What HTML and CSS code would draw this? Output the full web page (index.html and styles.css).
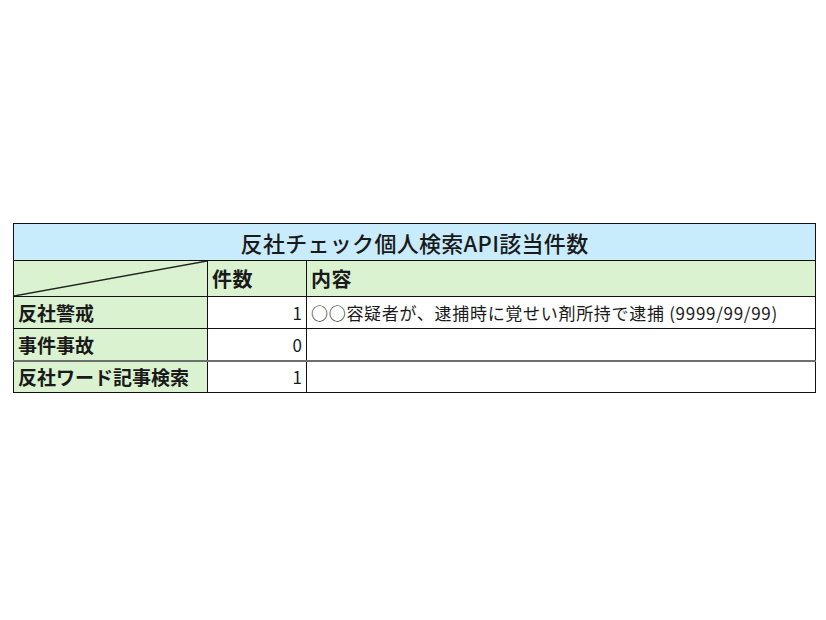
FILE: index.html
```html
<!DOCTYPE html>
<html lang="ja">
<head>
<meta charset="utf-8">
<title>反社チェック個人検索API該当件数</title>
<link rel="stylesheet" href="styles.css">
</head>
<body>
<table class="sheet">
  <colgroup>
    <col class="c-label">
    <col class="c-count">
    <col class="c-detail">
  </colgroup>
  <tr class="r-title">
    <th colspan="3" class="title">反社チェック個人検索API該当件数</th>
  </tr>
  <tr class="r-head">
    <th class="corner"><svg class="diag" viewBox="0 0 100 100" preserveAspectRatio="none"><line x1="0" y1="100" x2="100" y2="0" stroke="#222" stroke-width="1.4" vector-effect="non-scaling-stroke"/></svg></th>
    <th class="head">件数</th>
    <th class="head">内容</th>
  </tr>
  <tr class="r-row">
    <th class="label">反社警戒</th>
    <td class="num">1</td>
    <td class="detail">○○容疑者が、逮捕時に覚せい剤所持で逮捕 (9999/99/99)</td>
  </tr>
  <tr class="r-row">
    <th class="label">事件事故</th>
    <td class="num">0</td>
    <td class="detail"></td>
  </tr>
  <tr class="r-row r-last">
    <th class="label">反社ワード記事検索</th>
    <td class="num">1</td>
    <td class="detail"></td>
  </tr>
</table>
</body>
</html>
```
FILE: styles.css
```css
html, body {
  margin: 0;
  padding: 0;
  background: #ffffff;
}
body {
  padding: 223px 0 0 13px;
  font-family: "Noto Sans CJK JP", "Noto Sans", sans-serif;
  color: #1a1a1a;
}
.sheet {
  border-collapse: collapse;
  table-layout: fixed;
  width: 802px;
  border: 1px solid #111;
}
.c-label { width: 194px; }
.c-count { width: 99px; }
.c-detail { width: 509px; }

.sheet th, .sheet td {
  border: 1px solid #111;
  padding: 0 4px;
  line-height: 1;
  white-space: nowrap;
  overflow: hidden;
}
.r-title { height: 37px; }
.title {
  background: #c9ecfd;
  font-size: 22px;
  font-weight: 500;
  text-align: center;
  letter-spacing: 0.3px;
  border-bottom: 2px solid #56604f;
  padding-top: 0;
}
.r-head { height: 36px; }
.head {
  background: #daf2d0;
  font-size: 20px;
  font-weight: 700;
  text-align: left;
  letter-spacing: 0.5px;
  padding-top: 2px;
}
.corner {
  background: #daf2d0;
  padding: 0;
  position: relative;
}
.diag {
  position: absolute;
  left: 0;
  top: 0;
  width: 100%;
  height: 100%;
  display: block;
}
.r-row { height: 32px; }
.label {
  background: #daf2d0;
  font-size: 19px;
  font-weight: 700;
  text-align: left;
}
.num {
  font-size: 17px;
  text-align: right;
}
.detail {
  font-size: 17px;
  text-align: left;
  letter-spacing: 0.7px;
}
.r-last th, .r-last td {
  border-top: 2px solid #6e6e6e;
}
```
